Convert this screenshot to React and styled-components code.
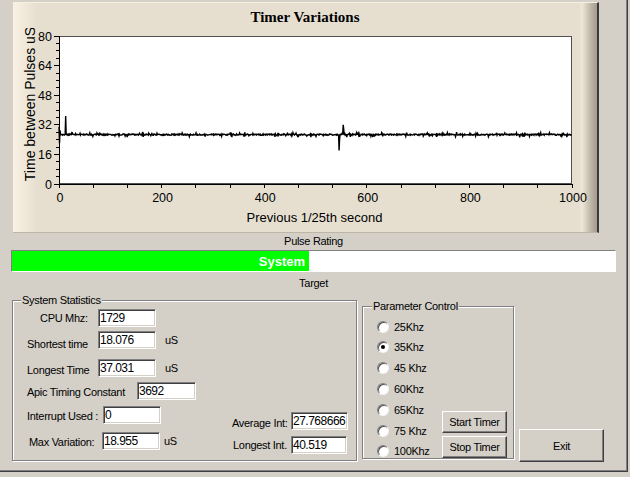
import styled, { createGlobalStyle } from "styled-components";

const GlobalStyle = createGlobalStyle`
  html, body {
    margin: 0;
    padding: 0;
    background: #d4d0c8;
  }
  body {
    font-family: "Liberation Sans", Arial, sans-serif;
    font-size: 11px;
    color: #000;
  }
`;

// plot area inside the chart svg
const PLOT = { x0: 46, x1: 559, y0: 8, y1: 156 };
const sx = (i) => PLOT.x0 + (i / 1000) * (PLOT.x1 - PLOT.x0);
const sy = (v) => PLOT.y1 - (v / 80) * (PLOT.y1 - PLOT.y0);

function mulberry32(a) {
  return function () {
    a |= 0;
    a = (a + 0x6d2b79f5) | 0;
    let t = Math.imul(a ^ (a >>> 15), 1 | a);
    t = (t + Math.imul(t ^ (t >>> 7), 61 | t)) ^ t;
    return ((t ^ (t >>> 14)) >>> 0) / 4294967296;
  };
}

function makeSamples() {
  const rand = mulberry32(1729);
  const out = [];
  for (let i = 0; i < 1000; i++) {
    let v = 26.7 + (rand() - 0.5) * 0.7;
    if (rand() < 0.1) v += (rand() < 0.5 ? -1 : 1) * (0.6 + rand() * 0.6);
    out.push(v);
  }
  const spikes = { 0: 31, 1: 22, 2: 29, 13: 36.8, 546: 18.1, 547: 24.5, 554: 32, 555: 29.5 };
  Object.entries(spikes).forEach(([i, v]) => (out[i] = v));
  return out;
}

const samples = makeSamples();
const points = samples.map((v, i) => `${sx(i).toFixed(2)},${sy(v).toFixed(2)}`).join(" ");

const yMajor = [0, 16, 32, 48, 64, 80];
const yMinor = [];
for (let v = 0; v <= 80; v += 4) if (v % 16 !== 0) yMinor.push(v);
const xMajor = [0, 200, 400, 600, 800, 1000];
const xMinor = [];
for (let k = 0; k <= 15; k++) if (k % 3 !== 0) xMinor.push((k * 200) / 3);

const Window = styled.div`
  width: 628px;
  height: 472px;
  box-sizing: border-box;
  padding-left: 11px;
  box-shadow: inset -1px -1px 0 #404040, inset -2px -2px 0 #808080;
  display: flex;
  flex-direction: column;
`;

const ChartPanel = styled.div`
  margin: 2px 0 0 2px;
  width: 586px;
  height: 231px;
  box-sizing: border-box;
  border-top: 1px solid #f6f0e4;
  border-right: 2px solid #3a3a3a;
  border-bottom: 1px solid #bdb5a5;
  background: linear-gradient(
    to right,
    #f9f2e4 0px,
    #f0e9da 12px,
    #e6dfd0 24px,
    #e6dfd0 566px,
    #eee7d9 569px,
    #d3cbba 574px,
    #b8b0a0 579px,
    #a29a8a 584px
  );
  display: flex;
  flex-direction: column;
`;

const ChartTitle = styled.div`
  height: 25px;
  box-sizing: border-box;
  padding-top: 5px;
  line-height: 18px;
  text-align: center;
  font-family: "Liberation Serif", "Times New Roman", serif;
  font-weight: bold;
  font-size: 15px;
`;

const ChartSvg = styled.svg`
  display: block;
  flex: none;
  font-family: "Liberation Sans", Arial, sans-serif;
`;

const Caption = styled.div`
  width: 605px;
  height: 14px;
  line-height: 14px;
  margin-top: ${(p) => p.$mt}px;
  text-align: center;
  letter-spacing: -0.3px;
`;

const RatingBar = styled.div`
  margin-top: 2px;
  width: 605px;
  height: 22px;
  box-sizing: border-box;
  border-top: 1px solid #808080;
  border-left: 1px solid #808080;
  border-bottom: 1px solid #fff;
  border-right: 1px solid #fff;
  background: #fff;
  display: flex;
`;

const RatingFill = styled.div`
  background: #00ff00;
  height: 100%;
  box-sizing: border-box;
  padding-right: 4px;
  display: flex;
  align-items: center;
  justify-content: flex-end;
  color: #fff;
  font-weight: bold;
  font-size: 13px;
`;

const BottomRow = styled.div`
  display: flex;
  align-items: flex-start;
  margin-top: 10px;
`;

const GroupBox = styled.div`
  position: relative;
  flex: none;
  box-sizing: border-box;
  width: ${(p) => p.$w}px;
  height: ${(p) => p.$h}px;
  margin-left: ${(p) => p.$ml}px;
  margin-top: ${(p) => p.$mt || 0}px;
  border: 1px solid #808080;
  box-shadow: inset 1px 1px 0 #fff, 1px 1px 0 #fff;
  display: flex;
  align-items: flex-start;
`;

const Legend = styled.span`
  position: absolute;
  top: -7px;
  left: ${(p) => p.$left}px;
  padding: 0 1px;
  line-height: 13px;
  background: #d4d0c8;
  letter-spacing: -0.3px;
  white-space: nowrap;
`;

const Column = styled.div`
  flex: none;
  box-sizing: border-box;
  width: ${(p) => (p.$w ? `${p.$w}px` : "auto")};
  padding-top: ${(p) => p.$pt}px;
  padding-left: ${(p) => p.$pl || 0}px;
  display: flex;
  flex-direction: column;
`;

const StatRow = styled.div`
  flex: none;
  display: flex;
  align-items: flex-start;
  height: 18px;
  margin-top: ${(p) => p.$mt || 0}px;
`;

const Label = styled.span`
  display: block;
  flex: none;
  margin-left: ${(p) => p.$ml}px;
  width: ${(p) => p.$w}px;
  margin-top: ${(p) => p.$dy}px;
  line-height: 13px;
  white-space: nowrap;
  letter-spacing: -0.3px;
`;

const Unit = styled.span`
  margin-left: ${(p) => p.$ml}px;
  margin-top: 2.5px;
  line-height: 13px;
  letter-spacing: -0.3px;
`;

const ValueBox = styled.input`
  flex: none;
  margin: 0;
  width: ${(p) => p.$w}px;
  height: 18px;
  box-sizing: border-box;
  padding: 0 0 0 1px;
  background: #fff;
  border-top: 1px solid #808080;
  border-left: 1px solid #808080;
  border-bottom: 1px solid #fff;
  border-right: 1px solid #fff;
  box-shadow: inset 1px 1px 0 #404040, inset -1px -1px 0 #d4d0c8;
  font-family: "Liberation Sans", Arial, sans-serif;
  font-size: 12px;
  letter-spacing: -0.5px;
  color: #000;
  outline: none;
`;

const RadioRow = styled.label`
  flex: none;
  display: flex;
  align-items: center;
  gap: 5px;
  height: 20.8px;
  letter-spacing: -0.3px;
`;

const RadioDot = styled.span`
  flex: none;
  width: 12px;
  height: 12px;
  box-sizing: border-box;
  border-radius: 50%;
  background: #fff;
  border: 1px solid;
  border-color: #808080 #f4f4f4 #f4f4f4 #808080;
  box-shadow: inset 1px 1px 0 #505050;
  display: flex;
  align-items: center;
  justify-content: center;
  &::after {
    content: "";
    width: 4px;
    height: 4px;
    border-radius: 50%;
    background: ${(p) => (p.$on ? "#000" : "transparent")};
  }
`;

const Button = styled.button`
  flex: none;
  margin: ${(p) => p.$mt || 0}px 0 0 ${(p) => p.$ml || 0}px;
  width: ${(p) => p.$w}px;
  height: ${(p) => p.$h}px;
  box-sizing: border-box;
  padding: 0;
  background: #d4d0c8;
  border-top: 1px solid #fff;
  border-left: 1px solid #fff;
  border-right: 1px solid #404040;
  border-bottom: 1px solid #404040;
  box-shadow: inset -1px -1px 0 #808080;
  font-family: "Liberation Sans", Arial, sans-serif;
  font-size: 11px;
  letter-spacing: -0.3px;
  color: #000;
`;

function Chart() {
  return (
    <ChartSvg width="586" height="203" viewBox="0 0 586 203">
      <rect x="46.5" y="8.5" width="512" height="147" fill="#fff" stroke="#505050" />
      <g stroke="#000" shapeRendering="crispEdges">
        {yMajor.map((v) => (
          <line key={`ym${v}`} x1="41" x2="46" y1={sy(v)} y2={sy(v)} />
        ))}
        {yMinor.map((v) => (
          <line key={`yn${v}`} x1="43" x2="46" y1={sy(v)} y2={sy(v)} />
        ))}
        {xMajor.concat(xMinor).map((v) => (
          <line key={`x${v}`} x1={sx(v)} x2={sx(v)} y1="156" y2="160" />
        ))}
        <line x1="46.5" x2="46.5" y1="8" y2="157" />
        <line x1="46" x2="559" y1="156.5" y2="156.5" />
      </g>
      <polyline points={points} fill="none" stroke="#000" strokeWidth="1.4" />
      <g fontSize="12.5" fill="#000">
        {yMajor.map((v) => (
          <text key={`yl${v}`} x="39" y={sy(v) + 4.5} textAnchor="end">
            {v}
          </text>
        ))}
        {xMajor.map((v) => (
          <text key={`xl${v}`} x={sx(v) + 1} y="173.5" textAnchor="middle">
            {v}
          </text>
        ))}
      </g>
      <text x="301.5" y="194" fontSize="13" textAnchor="middle">
        Previous 1/25th second
      </text>
      <text x="17" y="81" fontSize="14" textAnchor="middle" transform="rotate(-90 17 76)">
        Time between Pulses uS
      </text>
    </ChartSvg>
  );
}

const rates = ["25Khz", "35Khz", "45 Khz", "60Khz", "65Khz", "75 Khz", "100Khz"];

export default function App() {
  return (
    <>
      <GlobalStyle />
      <Window>
        <ChartPanel>
          <ChartTitle>Timer Variations</ChartTitle>
          <Chart />
        </ChartPanel>

        <Caption $mt={1}>Pulse Rating</Caption>
        <RatingBar>
          <RatingFill style={{ width: "297px" }}>System</RatingFill>
        </RatingBar>
        <Caption $mt={4}>Target</Caption>

        <BottomRow>
          <GroupBox $w={345} $h={161} $ml={1}>
            <Legend $left={8}>System Statistics</Legend>
            <Column $w={200} $pt={8}>
              <StatRow>
                <Label $ml={27} $w={58} $dy={2.5}>CPU Mhz:</Label>
                <ValueBox $w={58} readOnly value="1729" />
              </StatRow>
              <StatRow $mt={4}>
                <Label $ml={14} $w={71} $dy={6.5}>Shortest time</Label>
                <ValueBox $w={58} readOnly value="18.076" />
                <Unit $ml={9}>uS</Unit>
              </StatRow>
              <StatRow $mt={10}>
                <Label $ml={14} $w={71} $dy={4.5}>Longest Time</Label>
                <ValueBox $w={58} readOnly value="37.031" />
                <Unit $ml={9}>uS</Unit>
              </StatRow>
              <StatRow $mt={5}>
                <Label $ml={14} $w={110} $dy={3.5}>Apic Timing Constant</Label>
                <ValueBox $w={59} readOnly value="3692" />
              </StatRow>
              <StatRow $mt={6}>
                <Label $ml={14} $w={76} $dy={3.5}>Interrupt Used :</Label>
                <ValueBox $w={58} readOnly value="0" />
              </StatRow>
              <StatRow $mt={8}>
                <Label $ml={16} $w={73} $dy={3.5}>Max Variation:</Label>
                <ValueBox $w={58} readOnly value="18.955" />
                <Unit $ml={4}>uS</Unit>
              </StatRow>
            </Column>
            <Column $pt={111}>
              <StatRow>
                <Label $ml={19} $w={59} $dy={4.5}>Average Int:</Label>
                <ValueBox $w={57} readOnly value="27.768666" />
              </StatRow>
              <StatRow $mt={6}>
                <Label $ml={20} $w={58} $dy={2.5}>Longest Int.</Label>
                <ValueBox $w={56} readOnly value="40.519" />
              </StatRow>
            </Column>
          </GroupBox>

          <GroupBox $w={152} $h={153} $ml={5} $mt={6}>
            <Legend $left={9}>Parameter Control</Legend>
            <Column $w={79} $pt={9.3} $pl={14}>
              {rates.map((r) => (
                <RadioRow key={r}>
                  <RadioDot $on={r === "35Khz"} />
                  {r}
                </RadioRow>
              ))}
            </Column>
            <Column $pt={104}>
              <Button $w={65} $h={22}>Start Timer</Button>
              <Button $w={65} $h={22} $mt={3}>Stop Timer</Button>
            </Column>
          </GroupBox>

          <Button $w={85} $h={33} $ml={5} $mt={129}>
            Exit
          </Button>
        </BottomRow>
      </Window>
    </>
  );
}
